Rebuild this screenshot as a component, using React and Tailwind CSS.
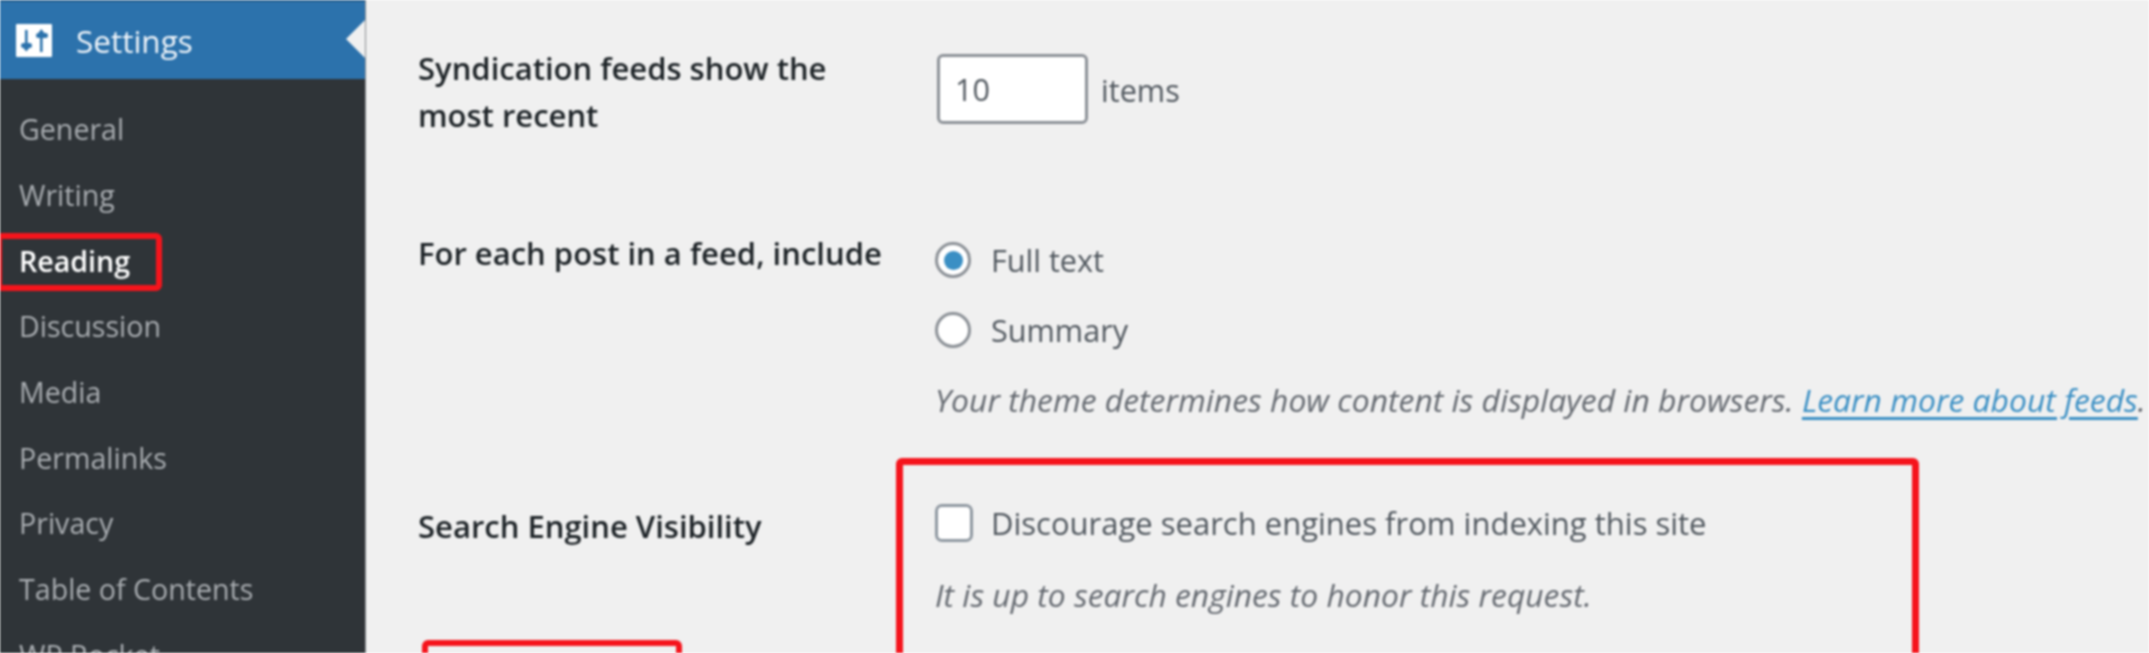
import React from "react";

const MENU = ["General", "Writing", "Reading", "Discussion", "Media", "Permalinks", "Privacy", "Table of Contents", "WP Rocket"];

function SettingsIcon() {
  return (
    <svg viewBox="0 0 36 33" className="w-[36px] h-[33px] shrink-0">
      <rect x="0" y="0" width="36" height="33" rx="1" fill="#ffffff" />
      <path d="M9 6h2.6v16H9z M10.3 27.5l-3-3.5h6z" fill="#2c72ac" />
      <rect x="5" y="19" width="11" height="5" rx="2.5" fill="#2c72ac" />
      <path d="M24 11h2.6v17H24z" fill="#2c72ac" />
      <rect x="20" y="9" width="12" height="5" rx="2.5" fill="#2c72ac" />
      <path d="M25.3 5l3 4h-6z" fill="#2c72ac" />
    </svg>
  );
}

function Sidebar() {
  return (
    <aside className="w-[366px] shrink-0 bg-[#2f3438] border-r border-[#8a8d90]">
      <div className="relative h-[79px] bg-[#2c72ac] border-t-2 border-[#27608f] flex items-center pl-[16px] gap-[24px]">
        <SettingsIcon />
        <span className="text-[31.5px] text-[#f0f5fa] leading-none">Settings</span>
        <div className="absolute right-0 top-[18px] w-0 h-0 border-y-[19px] border-y-transparent border-r-[19px] border-r-[#f0f0f0]" />
      </div>
      <ul className="pt-[17px]">
        {MENU.map((item) => {
          const active = item === "Reading";
          return (
            <li
              key={item}
              className={`relative h-[65.7px] flex items-center pl-[19px] text-[28.6px] ${active ? "text-white font-semibold" : "text-[#a9adb1]"}`}
            >
              {item}
              {active && <div className="absolute left-[-4px] top-[6px] w-[166px] h-[58px] border-[6px] border-[#f5141c] rounded-[6px]" />}
            </li>
          );
        })}
      </ul>
    </aside>
  );
}

function Radio({ checked, label }) {
  return (
    <div className="h-[70px] flex items-center gap-[20px]">
      <span className="w-[36px] h-[36px] rounded-full bg-white border-[3px] border-[#8c9197] flex items-center justify-center shrink-0">
        {checked && <span className="w-[19px] h-[19px] rounded-full bg-[#3a8fc4]" />}
      </span>
      <span>{label}</span>
    </div>
  );
}

export default function App() {
  return (
    <div
      className="flex h-[653px] w-[2149px] overflow-hidden bg-[#f0f0f0] text-[#50575e] text-[30.6px] leading-[47px] blur-[0.8px]"
      style={{ fontFamily: '"Open Sans", sans-serif' }}
    >
      <Sidebar />
      <main className="flex-1 pl-[52px] pt-[45px]">
        <div className="flex">
          <div className="w-[519px] font-semibold text-[#1d2327] text-[31px]">
            Syndication feeds show the
            <br />
            most recent
          </div>
          <div className="flex items-center gap-[13px] h-[70px] mt-[9px]">
            <div className="w-[151px] h-[70px] rounded-[6px] border-[3px] border-[#8c9197] bg-white pl-[15px] pt-[1px] flex items-center">10</div>
            <span className="pt-[3px]">items</span>
          </div>
        </div>

        <div className="flex mt-[91px]">
          <div className="w-[517px] font-semibold text-[#1d2327] text-[31px]">For each post in a feed, include</div>
          <div className="-mt-[5px]">
            <Radio checked label="Full text" />
            <Radio label="Summary" />
            <p className="mt-[11px] italic text-[#646970] text-[31.85px] whitespace-nowrap">
              Your theme determines how content is displayed in browsers.{" "}
              <a className="text-[#3a8fc4] underline decoration-[3px] underline-offset-[5px]">Learn more about feeds</a>.
            </p>
          </div>
        </div>

        <div className="flex mt-[35px]">
          <div className="w-[478px] pt-[45px]">
            <div className="font-semibold text-[#1d2327] text-[31px]">Search Engine Visibility</div>
            <div className="mt-[90px] ml-[4px] w-[260px] h-[80px] border-[6px] border-[#f5141c] rounded-[6px]" />
          </div>
          <div className="w-[1023px] h-[300px] border-[7px] border-[#f5141c] rounded-[6px] pl-[32px] pt-[34px]">
            <div className="flex items-center gap-[18px]">
              <span className="w-[38px] h-[38px] rounded-[7px] bg-white border-[3px] border-[#8f98a1] shrink-0" />
              <span className="text-[31px] pt-[1px]">Discourage search engines from indexing this site</span>
            </div>
            <p className="mt-[24px] italic text-[#646970] text-[31.8px]">It is up to search engines to honor this request.</p>
          </div>
        </div>
      </main>
    </div>
  );
}
